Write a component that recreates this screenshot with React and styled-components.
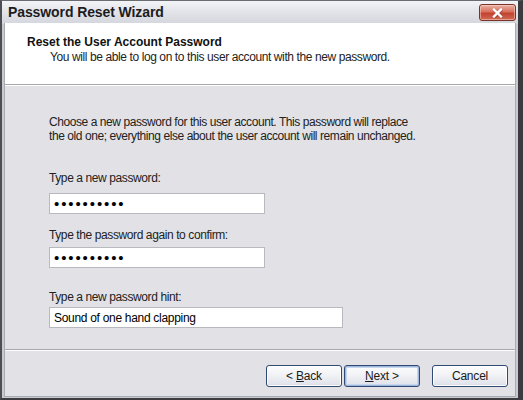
import React from "react";
import styled, { createGlobalStyle } from "styled-components";

const Global = createGlobalStyle`
  html, body { margin: 0; padding: 0; background: #ffffff; }
  body { font-family: "Liberation Sans", Arial, sans-serif; }
  * { box-sizing: border-box; }
`;

const Window = styled.div`
  width: 523px;
  height: 400px;
  display: flex;
  flex-direction: column;
  background: linear-gradient(#eef0f4, #d6d8df 23px, #c8cad1 23px);
  border-left: 2px solid #4d4d52;
  border-right: 5px solid #3c3c40;
  border-bottom: 2px solid #3c3c40;
  border-top: 1px solid #6b6c72;
`;

const TitleBar = styled.div`
  height: 22px;
  display: flex;
  align-items: center;
  justify-content: space-between;
  padding: 0 2px 0 6px;
  background: linear-gradient(#f3f4f7 0%, #e4e5ea 45%, #d5d7de 100%);
`;

const TitleText = styled.span`
  font-size: 14px;
  font-weight: bold;
  color: #1c1c20;
  letter-spacing: -0.1px;
`;

const CloseButton = styled.button`
  width: 37px;
  height: 17px;
  margin-top: 1px;
  border: 1px solid #7b3328;
  border-radius: 3px;
  background: linear-gradient(#eab3a6 0%, #d8705d 45%, #c2432f 55%, #cf6a55 100%);
  display: flex;
  align-items: center;
  justify-content: center;
  padding: 0;
  box-shadow: inset 0 0 0 1px rgba(255, 220, 210, 0.5);
`;

const Frame = styled.div`
  flex: 1;
  display: flex;
  flex-direction: column;
  margin: 0 2px 1px 2px;
  border: 1px solid #a9abb3;
  border-top: none;
`;

const Header = styled.div`
  height: 62px;
  background: #ffffff;
  border-bottom: 1px solid #a6a7ad;
  padding: 12px 0 0 22px;
`;

const HeaderTitle = styled.div`
  font-size: 12px;
  font-weight: bold;
  color: #111;
  line-height: 15px;
`;

const HeaderSub = styled.div`
  font-size: 12px;
  letter-spacing: -0.4px;
  color: #222;
  line-height: 15px;
  padding-left: 23px;
`;

const Body = styled.div`
  flex: 1;
  background: #e1e1e6;
  border-top: 1px solid #ffffff;
  padding: 29px 0 0 44px;
  display: flex;
  flex-direction: column;
`;

const Paragraph = styled.p`
  margin: 0 0 28px 0;
  font-size: 12px;
  letter-spacing: -0.43px;
  line-height: 14px;
  color: #222;
`;

const Field = styled.div`
  display: flex;
  flex-direction: column;
  gap: ${(p) => p.$gap}px;
  margin-bottom: ${(p) => p.$after}px;
`;

const Label = styled.label`
  font-size: 12px;
  letter-spacing: -0.4px;
  line-height: 14px;
  color: #222;
`;

const Input = styled.input`
  width: ${(p) => p.$w}px;
  height: 21px;
  border: 1px solid #b8b9bf;
  background: #ffffff;
  padding: 0 0 0 4px;
  font-family: "Liberation Sans", Arial, sans-serif;
  font-size: ${(p) => (p.type === "password" ? "15px" : "12px")};
  letter-spacing: ${(p) => (p.type === "password" ? "1.9px" : "-0.3px")};
  color: #000;
  outline: none;
  caret-color: #000;
`;

const Footer = styled.div`
  height: 47px;
  background: #e1e1e6;
  border-top: 1px solid #a8a9b0;
  box-shadow: inset 0 1px 0 #ffffff;
  display: flex;
  justify-content: flex-end;
  align-items: flex-start;
  padding: 15px 7px 0 0;
`;

const ButtonGroup = styled.div`
  display: flex;
  gap: 2px;
  margin-right: 12px;
`;

const Button = styled.button`
  width: ${(p) => p.$w}px;
  height: 22px;
  border: 1px solid #2f4a74;
  border-radius: 3px;
  background: linear-gradient(#fdfdfe 0%, #f0f1f5 50%, #e2e4ec 90%, #cfd2dc 100%);
  font-family: "Liberation Sans", Arial, sans-serif;
  font-size: 12px;
  letter-spacing: -0.2px;
  color: #1a1a1a;
  padding: 0;
  box-shadow: ${(p) => (p.$default ? "inset 0 0 0 1px #9fb6dc, inset 0 0 0 2px #c9d7ee" : "inset 0 0 0 1px #ffffff")};
  u { text-decoration: underline; text-underline-offset: 1px; }
`;

export default function App() {
  return (
    <>
      <Global />
      <Window>
        <TitleBar>
          <TitleText>Password Reset Wizard</TitleText>
          <CloseButton aria-label="Close">
            <svg width="11" height="10" viewBox="0 0 11 10">
              <path d="M2 1.5 L9 8.5 M9 1.5 L2 8.5" stroke="#8a3a2c" strokeWidth="3" strokeLinecap="square" opacity="0.5" transform="translate(0.6 0.6)" />
              <path d="M2 1.5 L9 8.5 M9 1.5 L2 8.5" stroke="#ffffff" strokeWidth="2.4" strokeLinecap="square" />
            </svg>
          </CloseButton>
        </TitleBar>
        <Frame>
          <Header>
            <HeaderTitle>Reset the User Account Password</HeaderTitle>
            <HeaderSub>You will be able to log on to this user account with the new password.</HeaderSub>
          </Header>
          <Body>
            <Paragraph>
              Choose a new password for this user account. This password will replace
              <br />
              the old one; everything else about the user account will remain unchanged.
            </Paragraph>
            <Field $gap={8} $after={14}>
              <Label>Type a new password:</Label>
              <Input type="password" readOnly defaultValue="abcdefghij" $w={216} />
            </Field>
            <Field $gap={5} $after={22}>
              <Label>Type the password again to confirm:</Label>
              <Input type="password" readOnly defaultValue="abcdefghij" $w={216} />
            </Field>
            <Field $gap={3} $after={0}>
              <Label>Type a new password hint:</Label>
              <Input type="text" readOnly defaultValue="Sound of one hand clapping" $w={294} />
            </Field>
          </Body>
          <Footer>
            <ButtonGroup>
              <Button $w={76}>&lt; <u>B</u>ack</Button>
              <Button $w={76} $default><u>N</u>ext &gt;</Button>
            </ButtonGroup>
            <Button $w={76}>Cancel</Button>
          </Footer>
        </Frame>
      </Window>
    </>
  );
}
